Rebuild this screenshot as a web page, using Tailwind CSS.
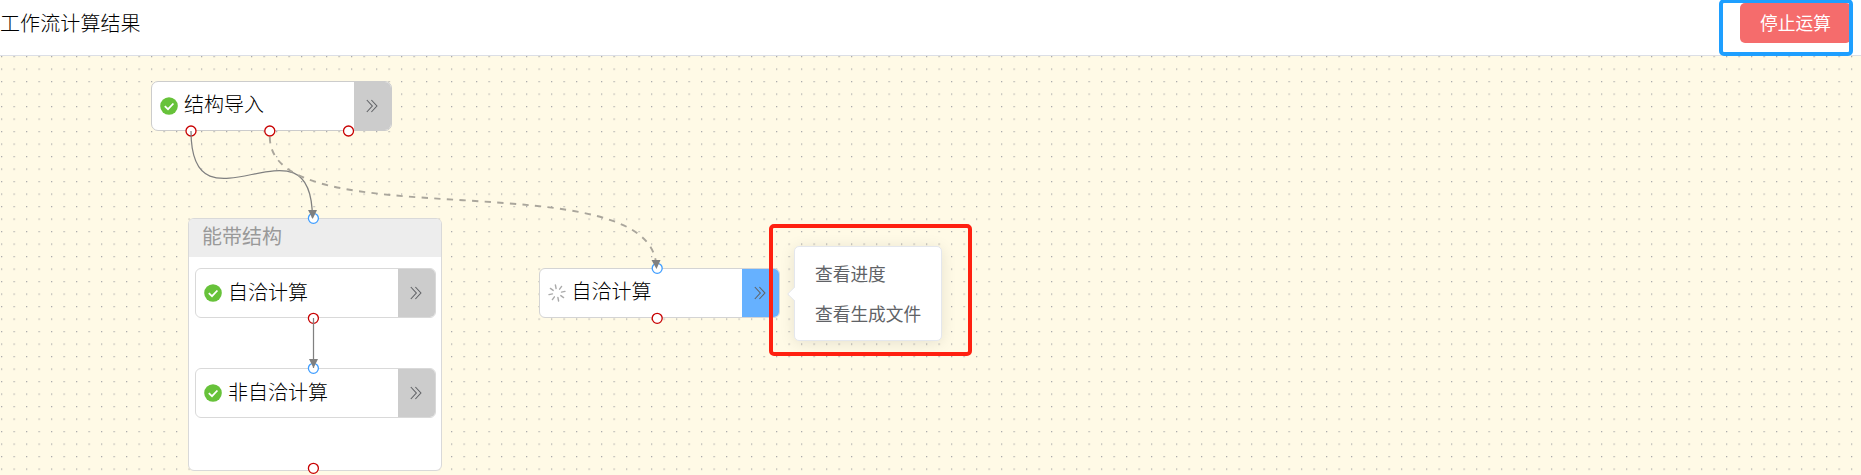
<!DOCTYPE html>
<html lang="zh-CN">
<head>
<meta charset="utf-8">
<title>工作流计算结果</title>
<script src="https://cdn.jsdelivr.net/npm/@tailwindcss/browser@4"></script>
</head>
<body class="w-[1861px] h-[475px] overflow-hidden bg-white text-black font-light font-['Noto_Sans_CJK_SC',sans-serif]">
<svg class="hidden">
  <symbol id="check" viewBox="0 0 18 18"><circle cx="9" cy="9" r="8.8" fill="#67c23a"/><path d="M4.8 9.2 8 12.2 13.4 6.5" fill="none" stroke="#fff" stroke-width="1.8"/></symbol>
  <symbol id="more" viewBox="0 0 12 14"><path d="M.8 1 6.3 7 .8 13M5.4 1 10.9 7 5.4 13" fill="none" stroke="#606266" stroke-width="1.1"/></symbol>
</svg>
<div class="relative flex flex-col h-full">
  <header class="flex justify-between h-[56px] shrink-0 border-b border-[#dcdfe6]">
    <h1 class="text-[20px] leading-[46px] font-light tracking-[0.1px]">工作流计算结果</h1>
    <button class="w-[111px] h-[40px] mt-[3px] mr-[10px] rounded-[5px] bg-[#f56c6c] text-white text-[17.7px] leading-[38px] pb-[2px] font-normal">停止运算</button>
  </header>
  <main class="relative flex-1 overflow-hidden bg-[#fffae6]">
    <svg class="absolute left-0 top-[-56px]" width="1861" height="475">
      <defs><pattern id="dots" x="1" y="56" width="12.5" height="12.5" patternUnits="userSpaceOnUse"><rect width="1.25" height="1.25" fill="#aaa"/></pattern></defs>
      <rect y="55" width="1861" height="420" fill="url(#dots)"/>
    </svg>

    <section class="absolute left-[151px] top-[25px] w-[241px] h-[50px] flex items-center bg-white border border-[#ccc] rounded-[7px] overflow-hidden">
      <svg class="w-[18px] h-[18px] ml-[8px]"><use href="#check"/></svg>
      <span class="ml-[6px] text-[20px] leading-[46px] mb-[4px] flex-1">结构导入</span>
      <span class="w-[37px] h-full bg-[#ccc] flex items-center justify-center"><svg class="w-[12px] h-[14px] mr-px"><use href="#more"/></svg></span>
    </section>

    <section class="absolute left-[188px] top-[162px] w-[254px] h-[253px] bg-white border border-[#d9d9d9] rounded-[6px] overflow-hidden">
      <h2 class="h-[38px] bg-[#ededed] text-[#999] text-[20px] leading-[34px] pl-[13px] font-normal">能带结构</h2>
      <div class="mt-[11px] ml-[6px] w-[241px] h-[50px] flex items-center bg-white border border-[#d9d9d9] rounded-[6px] overflow-hidden">
        <svg class="w-[18px] h-[18px] ml-[8px]"><use href="#check"/></svg>
        <span class="ml-[6px] text-[20px] leading-[46px] mb-[3px] flex-1">自洽计算</span>
        <span class="w-[37px] h-full bg-[#ccc] flex items-center justify-center"><svg class="w-[12px] h-[14px] mr-px"><use href="#more"/></svg></span>
      </div>
      <div class="mt-[50px] ml-[6px] w-[241px] h-[50px] flex items-center bg-white border border-[#d9d9d9] rounded-[6px] overflow-hidden">
        <svg class="w-[18px] h-[18px] ml-[8px]"><use href="#check"/></svg>
        <span class="ml-[6px] text-[20px] leading-[46px] mb-[3px] flex-1">非自洽计算</span>
        <span class="w-[37px] h-full bg-[#ccc] flex items-center justify-center"><svg class="w-[12px] h-[14px] mr-px"><use href="#more"/></svg></span>
      </div>
    </section>

    <section class="absolute left-[538.5px] top-[212px] w-[241px] h-[50px] flex items-center bg-white border border-[#d4d4d4] rounded-[6px] overflow-hidden">
      <svg class="w-[18px] h-[18px] ml-[8px]" viewBox="-9 -9 18 18" stroke="#aaa" stroke-width="1.4" stroke-linecap="round"><path d="M-1.6-8-.9-4.5M1.6 8 .9 4.5M-8 1.6-4.5.9M8-1.6 4.5-.9M-6.6-4.6-3.8-2.6M6.6 4.6 3.8 2.6M-4.6 6.6-2.6 3.8M4.6-6.6 2.6-3.8"/></svg>
      <span class="ml-[6px] text-[20px] leading-[46px] mb-[4px] flex-1">自洽计算</span>
      <span class="w-[37px] h-full bg-[#66b1ff] flex items-center justify-center"><svg class="w-[12px] h-[14px] mr-px"><use href="#more"/></svg></span>
    </section>

    <svg class="absolute left-0 top-[-56px]" width="1861" height="475" fill="none">
      <g fill="#fff" stroke="#c80000" stroke-width="1.3">
        <circle cx="191" cy="131" r="5"/><circle cx="269.8" cy="131" r="5"/><circle cx="348.5" cy="131" r="5"/>
        <circle cx="313.4" cy="318.3" r="5"/><circle cx="313.4" cy="468.3" r="5"/><circle cx="657.2" cy="318.3" r="5"/>
      </g>
      <g fill="#fff" stroke="#409eff" stroke-width="1.3">
        <circle cx="313.4" cy="218.3" r="5"/><circle cx="313.4" cy="368.3" r="5"/><circle cx="657.2" cy="268.3" r="5"/>
      </g>
      <g stroke="#808080" stroke-width="1.25">
        <path d="M191 131C191 243 312.4 106 312.4 218"/>
        <path d="M313.5 318V368"/>
        <path d="M269.8 137C270 241 656.3 158 656.3 268" stroke="#aaa69c" stroke-width="1.9" stroke-dasharray="6.3 6.3"/>
      </g>
      <path d="M308 210h9l-4.3 9zM309 359h9l-4.5 9zM651.5 260h9l-4 9z" fill="#808080"/>
    </svg>

    <div class="absolute left-[794px] top-[190px] w-[148px] h-[95px] bg-white border border-[#e4e7ed] rounded-[5px] shadow-[0_2px_15px_rgba(0,0,0,0.1)] text-[#606266] text-[17.7px] font-normal py-[6px] pl-[20px]">
      <svg class="absolute left-[-8px] top-[39px]" width="9" height="17"><path d="M9 0 .7 8 9 16z" fill="#fff"/><path d="M8 .8.7 8 8 15.2" fill="none" stroke="#e4e7ed"/></svg>
      <div class="leading-[40px]">查看进度</div>
      <div class="leading-[40px]">查看生成文件</div>
    </div>
    <div class="absolute left-[769px] top-[168px] w-[203px] h-[132px] border-4 border-[#ff2010] rounded-[5px]"></div>
  </main>
  <div class="absolute left-[1719px] top-[-1px] w-[134px] h-[57px] border-4 border-[#1e9fff] rounded-[5px]"></div>
</div>
</body>
</html>
